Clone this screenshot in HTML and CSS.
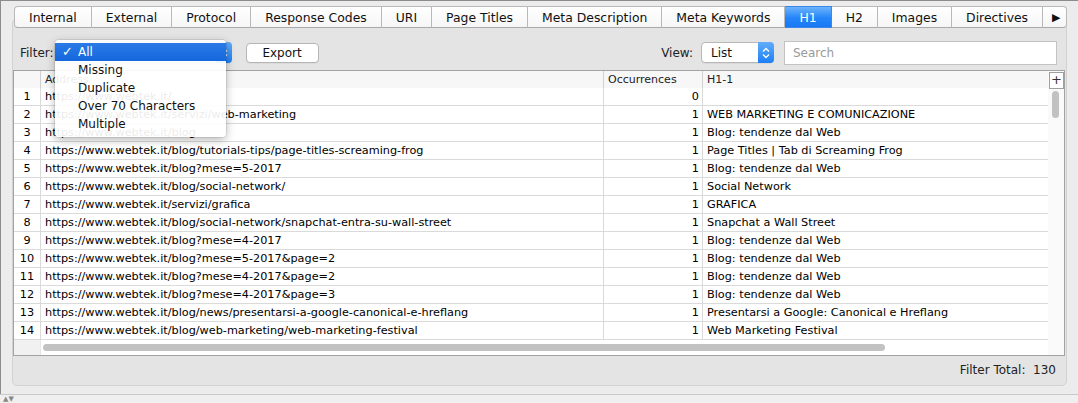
FILE: index.html
```html
<!DOCTYPE html>
<html>
  <head>
    <title>H1 - Screaming Frog</title>
    <link rel="stylesheet" href="styles.css">
  </head>
  <body>
    <div class="window">
      <div class="tabs">
        <div class="tab">Internal</div>
        <div class="tab">External</div>
        <div class="tab">Protocol</div>
        <div class="tab">Response Codes</div>
        <div class="tab">URI</div>
        <div class="tab">Page Titles</div>
        <div class="tab">Meta Description</div>
        <div class="tab">Meta Keywords</div>
        <div class="tab active">H1</div>
        <div class="tab">H2</div>
        <div class="tab">Images</div>
        <div class="tab">Directives</div>
        <div class="tab more">&#9654;</div>
      </div>

      <div class="panel">
        <div class="toolbar">
          <div class="group">
            <span class="label">Filter:</span>
            <div class="combo filter-combo">
              <span>All</span>
              <span class="combo-arrows">
                <svg width="8" height="12" viewBox="0 0 8 12"><path d="M1 4.5 4 1.5 7 4.5M1 7.5 4 10.5 7 7.5" fill="none" stroke="#fff" stroke-width="1.3"/></svg>
              </span>
            </div>
            <button class="btn">Export</button>
          </div>
          <div class="group right">
            <span class="label">View:</span>
            <div class="combo view-combo">
              <span>List</span>
              <span class="combo-arrows">
                <svg width="8" height="12" viewBox="0 0 8 12"><path d="M1 4.5 4 1.5 7 4.5M1 7.5 4 10.5 7 7.5" fill="none" stroke="#fff" stroke-width="1.3"/></svg>
              </span>
            </div>
            <div class="search">Search</div>
          </div>
        </div>

        <div class="table-box">
          <div class="table-main">
            <div class="row head">
              <div class="cell"></div>
              <div class="cell">Address</div>
              <div class="cell">Occurrences</div>
              <div class="cell">H1-1</div>
            </div>
            <div class="row"><div class="cell num">1</div><div class="cell">https://www.webtek.it/</div><div class="cell count">0</div><div class="cell"></div></div>
            <div class="row"><div class="cell num">2</div><div class="cell">https://www.webtek.it/servizi/web-marketing</div><div class="cell count">1</div><div class="cell">WEB MARKETING E COMUNICAZIONE</div></div>
            <div class="row"><div class="cell num">3</div><div class="cell">https://www.webtek.it/blog</div><div class="cell count">1</div><div class="cell">Blog: tendenze dal Web</div></div>
            <div class="row"><div class="cell num">4</div><div class="cell">https://www.webtek.it/blog/tutorials-tips/page-titles-screaming-frog</div><div class="cell count">1</div><div class="cell">Page Titles | Tab di Screaming Frog</div></div>
            <div class="row"><div class="cell num">5</div><div class="cell">https://www.webtek.it/blog?mese=5-2017</div><div class="cell count">1</div><div class="cell">Blog: tendenze dal Web</div></div>
            <div class="row"><div class="cell num">6</div><div class="cell">https://www.webtek.it/blog/social-network/</div><div class="cell count">1</div><div class="cell">Social Network</div></div>
            <div class="row"><div class="cell num">7</div><div class="cell">https://www.webtek.it/servizi/grafica</div><div class="cell count">1</div><div class="cell">GRAFICA</div></div>
            <div class="row"><div class="cell num">8</div><div class="cell">https://www.webtek.it/blog/social-network/snapchat-entra-su-wall-street</div><div class="cell count">1</div><div class="cell">Snapchat a Wall Street</div></div>
            <div class="row"><div class="cell num">9</div><div class="cell">https://www.webtek.it/blog?mese=4-2017</div><div class="cell count">1</div><div class="cell">Blog: tendenze dal Web</div></div>
            <div class="row"><div class="cell num">10</div><div class="cell">https://www.webtek.it/blog?mese=5-2017&amp;page=2</div><div class="cell count">1</div><div class="cell">Blog: tendenze dal Web</div></div>
            <div class="row"><div class="cell num">11</div><div class="cell">https://www.webtek.it/blog?mese=4-2017&amp;page=2</div><div class="cell count">1</div><div class="cell">Blog: tendenze dal Web</div></div>
            <div class="row"><div class="cell num">12</div><div class="cell">https://www.webtek.it/blog?mese=4-2017&amp;page=3</div><div class="cell count">1</div><div class="cell">Blog: tendenze dal Web</div></div>
            <div class="row"><div class="cell num">13</div><div class="cell">https://www.webtek.it/blog/news/presentarsi-a-google-canonical-e-hreflang</div><div class="cell count">1</div><div class="cell">Presentarsi a Google: Canonical e Hreflang</div></div>
            <div class="row"><div class="cell num">14</div><div class="cell">https://www.webtek.it/blog/web-marketing/web-marketing-festival</div><div class="cell count">1</div><div class="cell">Web Marketing Festival</div></div>
            <div class="hscroll">
              <div class="corner"></div>
              <div class="htrack"><div class="hthumb"></div></div>
            </div>
          </div>
          <div class="vscroll">
            <div class="plus">+</div>
            <div class="vthumb"></div>
          </div>
        </div>

        <div class="footer">Filter Total:&nbsp; 130</div>
      </div>

      <!-- open filter dropdown -->
      <div class="popup">
        <div class="item selected"><span class="check">&#10003;</span>All</div>
        <div class="item">Missing</div>
        <div class="item">Duplicate</div>
        <div class="item">Over 70 Characters</div>
        <div class="item">Multiple</div>
      </div>
    </div>
    <div class="status-strip"><span>&#9650;&#9660;</span></div>
  </body>
</html>
```

FILE: styles.css
```css
:root {
  --bg: #ececec;
  --panel: #e4e4e4;
  --grid-line: #dadada;
  --text: #111;
}

html,
body {
  margin: 0;
  padding: 0;
  width: 1078px;
  height: 403px;
  overflow: hidden;
  background: var(--bg);
}

body {
  font-family: "DejaVu Sans", "Liberation Sans", sans-serif;
  font-size: 12px;
  color: var(--text);
}

.window {
  position: relative;
  height: 394px;
  box-sizing: border-box;
  border-top: 1px solid #8c8c8c;
  border-left: 1px solid #8c8c8c;
  padding: 0 11px 0 11px;
}

/* Tabs */
.tabs {
  position: relative;
  z-index: 1;
  display: flex;
  height: 22px;
  margin: 5px 0 -10px 2px;
}

.tab {
  height: 22px;
  line-height: 22px;
  padding: 0 14px;
  box-sizing: border-box;
  font-size: 12.4px;
  background: linear-gradient(#ffffff, #f6f6f6);
  border: 1px solid #b9b9b9;
  border-left: none;
  border-bottom-color: #a9a9a9;
  white-space: nowrap;
}

.tab:first-child {
  border-left: 1px solid #b9b9b9;
  border-radius: 4px 0 0 4px;
}

.tab.active {
  background: linear-gradient(#6db3fb, #2485fa 55%, #1978f4);
  border-color: #3b86e8;
  color: #fff;
}

.tab.more {
  flex: 1;
  padding: 0 0 0 9px;
  font-size: 11px;
  border-radius: 0 4px 4px 0;
}

/* Panel */
.panel {
  background: var(--panel);
  border: 1px solid #d2d2d2;
  border-radius: 5px;
  padding-top: 21px;
}

.toolbar {
  display: flex;
  align-items: center;
  height: 25px;
  padding: 0 9px 0 7px;
  margin-bottom: 5px;
}

.group {
  display: flex;
  align-items: center;
}

.group.right {
  margin-left: auto;
}

.label {
  color: #222;
}

.combo {
  display: flex;
  align-items: center;
  height: 21px;
  box-sizing: border-box;
  background: #fff;
  border: 1px solid #b7b7b7;
  border-radius: 4px;
  padding-left: 9px;
  box-shadow: 0 1px 0 rgba(0, 0, 0, 0.05);
}

.combo > span:first-child {
  flex: 1;
}

.combo-arrows {
  display: flex;
  align-items: center;
  justify-content: center;
  width: 16px;
  height: 21px;
  margin: -1px -1px -1px 0;
  background: linear-gradient(#63acfa, #1c7ff6);
  border-radius: 0 4px 4px 0;
}

.filter-combo {
  width: 177px;
  margin-left: 1px;
}

.view-combo {
  width: 73px;
  margin-left: 8px;
}

.btn {
  margin-left: 14px;
  width: 73px;
  height: 20px;
  padding: 0;
  font: inherit;
  color: #111;
  background: #fff;
  border: 1px solid #b5b5b5;
  border-radius: 4px;
  box-shadow: 0 1px 0 rgba(0, 0, 0, 0.04);
}

.search {
  margin-left: 10px;
  width: 273px;
  height: 24px;
  line-height: 23px;
  box-sizing: border-box;
  padding-left: 8px;
  background: #fff;
  border: 1px solid #c3c3c3;
  color: #9a9a9a;
}

/* Results table */
.table-box {
  display: flex;
  margin-right: 1px;
  background: #fff;
  border: 1px solid #a2a2a2;
  font-size: 11.25px;
  color: #000;
}

.table-main {
  flex: 1;
  min-width: 0;
}

.row {
  display: grid;
  grid-template-columns: 27px 563px 99px 1fr;
  height: 18px;
  box-sizing: border-box;
  border-bottom: 1px solid var(--grid-line);
}

.row.head {
  height: 17px;
  background: #f7f7f7;
  border-bottom: none;
  color: #222;
  font-size: 11px;
}

.cell {
  line-height: 17px;
  padding: 0 4px;
  border-right: 1px solid var(--grid-line);
  white-space: nowrap;
  overflow: hidden;
}

.cell:last-child {
  border-right: none;
}

.row.head .cell {
  border-right-color: #d0d0d0;
}

.cell.num {
  text-align: center;
  padding: 0;
}

.cell.count {
  text-align: right;
  padding-right: 3px;
}

.hscroll {
  display: flex;
  height: 15px;
}

.corner {
  width: 26px;
  background: #f1f1f1;
  border-right: 1px solid #e6e6e6;
}

.htrack {
  flex: 1;
  padding: 4px 0 0 2px;
}

.hthumb {
  width: 842px;
  height: 7px;
  border-radius: 4px;
  background: #c2c2c2;
}

.vscroll {
  width: 16px;
  background: #fafafa;
}

.plus {
  height: 15px;
  width: 13px;
  margin: 1px 0 0 1px;
  line-height: 14px;
  text-align: center;
  font-size: 13px;
  color: #333;
  background: #fff;
  border: 1px solid #9f9f9f;
}

.vthumb {
  width: 7px;
  height: 27px;
  margin: 2px 0 0 4px;
  border-radius: 4px;
  background: #c2c2c2;
}

.footer {
  height: 29px;
  line-height: 28px;
  text-align: right;
  padding-right: 10px;
  color: #222;
}

/* Filter dropdown menu */
.popup {
  position: absolute;
  left: 54px;
  top: 39px;
  z-index: 2;
  width: 171px;
  padding: 3px 0 4px;
  background: rgba(255, 255, 255, 0.92);
  border-radius: 4px;
  box-shadow: 0 3px 10px rgba(0, 0, 0, 0.28), 0 0 0 1px rgba(0, 0, 0, 0.08);
}

.item {
  position: relative;
  height: 18px;
  line-height: 18px;
  padding-left: 23px;
  color: #111;
}

.item.selected {
  background: linear-gradient(#2a7ae6, #1567dd);
  color: #fff;
}

.check {
  position: absolute;
  left: 7px;
  font-size: 13px;
}

.status-strip {
  height: 9px;
  border-top: 1px solid #c9c9c9;
  background: #efefef;
  font-size: 7px;
  line-height: 9px;
  color: #888;
  padding-left: 3px;
  overflow: hidden;
}
```
